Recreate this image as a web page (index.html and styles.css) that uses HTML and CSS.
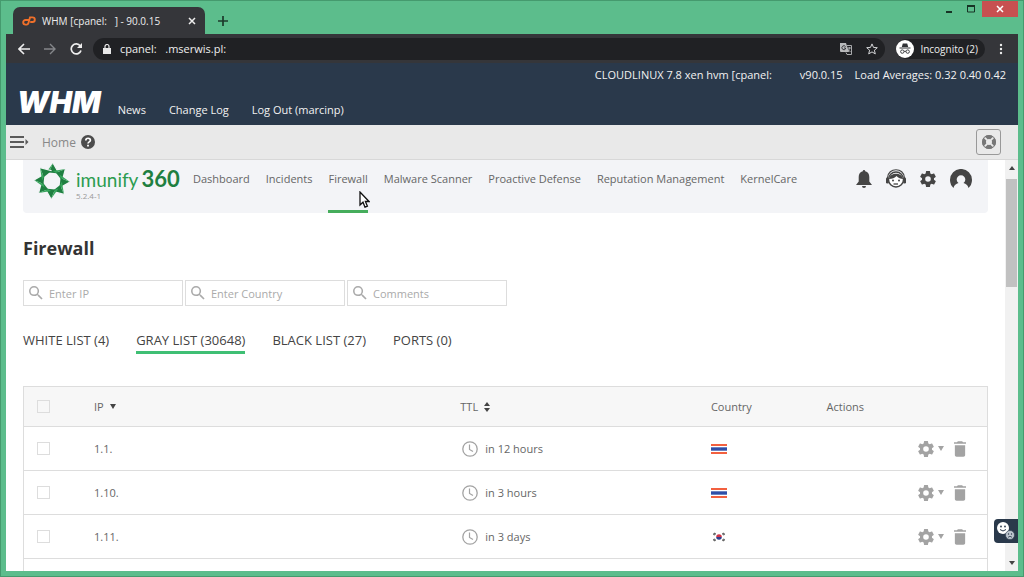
FILE: index.html
```html
<!DOCTYPE html>
<html lang="en">
<head>
<meta charset="utf-8">
<title>WHM - 90.0.15</title>
<link rel="stylesheet" href="styles.css">
</head>
<body>
<svg class="defs" aria-hidden="true">
  <symbol id="gear" viewBox="2 2 20 20"><path d="M19.43 12.98c.04-.32.07-.64.07-.98s-.03-.66-.07-.98l2.11-1.65a.5.5 0 0 0 .12-.64l-2-3.46a.5.5 0 0 0-.61-.22l-2.49 1a7.3 7.3 0 0 0-1.69-.98l-.38-2.65A.49.49 0 0 0 14 2h-4a.49.49 0 0 0-.49.42l-.38 2.65c-.61.25-1.17.59-1.69.98l-2.49-1a.5.5 0 0 0-.61.22l-2 3.46a.5.5 0 0 0 .12.64l2.11 1.65c-.04.32-.07.65-.07.98s.03.66.07.98l-2.11 1.65a.5.5 0 0 0-.12.64l2 3.46c.12.22.39.3.61.22l2.49-1c.52.4 1.08.73 1.69.98l.38 2.65c.03.24.24.42.49.42h4c.25 0 .46-.18.49-.42l.38-2.65c.61-.25 1.17-.59 1.69-.98l2.49 1c.23.09.49 0 .61-.22l2-3.46a.5.5 0 0 0-.12-.64zM12 15.5a3.5 3.5 0 1 1 0-7 3.5 3.5 0 0 1 0 7z"/></symbol>
  <symbol id="search" viewBox="3 3 18 18"><path d="M15.5 14h-.79l-.28-.27A6.47 6.47 0 0 0 16 9.5 6.5 6.5 0 1 0 9.5 16c1.61 0 3.09-.59 4.23-1.57l.27.28v.79l5 4.99L20.49 19zm-6 0a4.5 4.5 0 1 1 0-9 4.5 4.5 0 0 1 0 9z"/></symbol>
  <symbol id="trash" viewBox="5 3 14 18"><path d="M6 19c0 1.100.9 2 2 2h8c1.100 0 2-.9 2-2V7.500H6zM19 4h-3.500l-1-1h-5l-1 1H5v2h14z"/></symbol>
  <symbol id="clock" viewBox="0 0 16 16"><circle cx="8" cy="8" r="7.200" fill="none" stroke="currentColor" stroke-width="1.300"/><path d="M7.500 3.500v5l3.500 2" fill="none" stroke="currentColor" stroke-width="1.200"/></symbol>
  <symbol id="thai" viewBox="0 0 16 10"><path fill="#fff" d="M0 0h16v10H0z"/><path fill="#f2603f" d="M0 0h16v2H0zM0 8h16v2H0z"/><path fill="#2f4fa8" d="M0 3.300h16v3.400H0z"/></symbol>
  <symbol id="korea" viewBox="0 0 16 10"><path fill="#cf3448" d="M5.200 5a2.800 2.800 0 0 1 5.600 0z"/><path fill="#2f3f8c" d="M5.200 5a2.800 2.800 0 0 0 5.600 0z"/><path d="M2.500 2.800l2-1.600M2.500 7.200l2 1.600M13.500 2.800l-2-1.600M13.500 7.200l-2 1.600" stroke="#444" stroke-width="2" stroke-dasharray="1.100 .3"/></symbol>
</svg>
<div class="window">
  <header class="tabstrip">
    <div class="tab">
      <svg class="i-cp" viewBox="0 0 14 10"><g fill="none" stroke="#f0702a" stroke-width="1.900"><path d="M6.500 4H3.500a2.300 2.300 0 0 0 0 4.600H4.800c.8 0 1.200-.4 1.500-1.200L8 1.400h2.500a2.300 2.300 0 0 1 0 4.600H8.200"/></g></svg>
      <span class="tab-title">WHM [cpanel: &nbsp; ] - 90.0.15</span>
      <button class="bare" aria-label="Close tab"><svg class="i8" viewBox="0 0 8 8"><path d="M1 1l6 6M7 1L1 7" stroke="#eee" stroke-width="1.500"/></svg></button>
    </div>
    <button class="bare newtab" aria-label="New tab"><svg class="i10" viewBox="0 0 10 10"><path d="M5 0v10M0 5h10" stroke="#1d3a2b" stroke-width="1.700"/></svg></button>
    <div class="wincontrols">
      <button class="bare wc" aria-label="Minimize"><svg class="i10" viewBox="0 0 10 10"><path d="M2 8h6" stroke="#173325" stroke-width="2"/></svg></button>
      <button class="bare wc" aria-label="Maximize"><svg class="i10" viewBox="0 0 10 10"><path d="M1.500 2v6h7V2" fill="none" stroke="#173325"/><path d="M1 2h8" stroke="#173325" stroke-width="2"/></svg></button>
      <button class="bare closewin" aria-label="Close window"><svg class="i8" viewBox="0 0 8 8"><path d="M1 1l6 6M7 1L1 7" stroke="#fff" stroke-width="1.500"/></svg></button>
    </div>
  </header>
  <div class="toolbar">
    <button class="bare" aria-label="Back"><svg class="i12" viewBox="0 0 12 12"><path d="M12 6H1M6 1L1 6l5 5" fill="none" stroke="#eee" stroke-width="1.600"/></svg></button>
    <button class="bare" aria-label="Forward"><svg class="i12" viewBox="0 0 12 12"><path d="M0 6h11M6 1l5 5-5 5" fill="none" stroke="#85878a" stroke-width="1.400"/></svg></button>
    <button class="bare" aria-label="Reload"><svg class="i12" viewBox="0 0 12 12"><path d="M10.300 3A5 5 0 1 0 11 7.500" fill="none" stroke="#eee" stroke-width="1.700"/><path d="M12 0v5H7z" fill="#eee"/></svg></button>
    <div class="address">
      <svg class="i-lock" viewBox="0 0 8 10"><path d="M0 4h8v6H0z" fill="#e8e8e8"/><path d="M2 4V2.500a2 2 0 0 1 4 0V4" fill="none" stroke="#e8e8e8" stroke-width="1.200"/></svg>
      <span class="url">cpanel: &nbsp; .mserwis.pl:</span>
      <button class="bare" aria-label="Translate"><svg class="i12" viewBox="0 0 12 12"><path d="M0 0h6l3 9H1a1 1 0 0 1-1-1z" fill="#b9babc"/><path d="M5.500 3.500A2 2 0 1 0 5.500 6V5H4" fill="none" stroke="#35363a"/><path d="M7 2.500h4.500v9H7L6 9.500M7.500 5h3.500M9.300 4v1c0 2-1 3-2 3.700M8 6.500l2.500 2.500" fill="none" stroke="#b9babc" stroke-width=".9"/></svg></button>
      <button class="bare" aria-label="Bookmark"><svg class="i12" viewBox="0 0 12 12"><path d="M6 .9l1.500 3.500 3.800.3-2.900 2.500.9 3.700L6 8.900l-3.300 2 .9-3.700L.7 4.700l3.800-.3z" fill="none" stroke="#d5d6d8"/></svg></button>
    </div>
    <div class="incognito">
      <svg class="i18" viewBox="0 0 18 18"><circle cx="9" cy="9" r="9" fill="#fff"/><path d="M5.800 7l1-3.500h4.400l1 3.500zM3.500 7.500h11v1h-11z" fill="#303236"/><g fill="none" stroke="#303236" stroke-width=".9"><circle cx="6.300" cy="11.600" r="1.700"/><circle cx="11.700" cy="11.600" r="1.700"/><path d="M8 11.500q1-.7 2 0"/></g></svg>
      <span>Incognito (2)</span>
    </div>
    <button class="bare" aria-label="Menu"><svg class="i-dots" viewBox="0 0 4 12"><g fill="#eee"><circle cx="2" cy="2" r="1.200"/><circle cx="2" cy="6" r="1.200"/><circle cx="2" cy="10" r="1.200"/></g></svg></button>
  </div>
  <div class="whm">
    <div class="whm-left">
      <span class="whm-logo">WHM</span>
      <nav class="whm-nav"><a href="#">News</a><a href="#">Change Log</a><a href="#">Log Out (marcinp)</a></nav>
    </div>
    <div class="whm-info"><span class="host">CLOUDLINUX 7.8 xen hvm [cpanel:</span><span>v90.0.15</span><span>Load Averages: 0.32 0.40 0.42</span></div>
  </div>
  <div class="crumbs">
    <button class="bare" aria-label="Toggle menu"><svg class="i-menu" viewBox="0 0 19 14"><path d="M0 2h14M0 7h14M0 12h14" stroke="#5a5a5a" stroke-width="2"/><path d="M15.500 4l3 3-3 3z" fill="#5a5a5a"/></svg></button>
    <a class="home" href="#">Home</a>
    <svg class="i14" viewBox="0 0 14 14"><circle cx="7" cy="7" r="7" fill="#4c4c4c"/><path d="M4.800 5.500c0-3 4.600-2.900 4.600-.3C9.400 7 7 6.700 7 8.600" fill="none" stroke="#fff" stroke-width="1.700"/><path d="M6.100 9.800h1.800v1.700H6.100z" fill="#fff"/></svg>
    <button class="bare support" aria-label="Support"><svg class="i14" viewBox="0 0 14 14"><circle cx="7" cy="7" r="5" fill="none" stroke="#777" stroke-width="4"/><path d="M2.200 2.200l3 3M11.800 2.200l-3 3M2.200 11.800l3-3M11.800 11.800l-3-3" stroke="#e9e9e9" stroke-width="1.800"/><circle cx="7" cy="7" r="6.500" fill="none" stroke="#777"/></svg></button>
  </div>
  <div class="viewport">
    <main class="page">
      <div class="card">
        <div class="brand">
          <svg class="i-star" viewBox="-18 -18 36 36"><defs><g id="blade"><path d="M1-18L7-7.500-3-8.500z" fill="#1f7f41"/><path d="M1-18L-3-8.500-6.500-7.500z" fill="#36a65c"/><path d="M1-18L7-7.500" stroke="#f3f4f7" stroke-width="1.200"/></g></defs><use href="#blade"/><use href="#blade" transform="rotate(45)"/><use href="#blade" transform="rotate(90)"/><use href="#blade" transform="rotate(135)"/><use href="#blade" transform="rotate(180)"/><use href="#blade" transform="rotate(225)"/><use href="#blade" transform="rotate(270)"/><use href="#blade" transform="rotate(315)"/></svg>
          <div class="brand-text"><div class="brand-name">imunify<b>360</b></div><div class="version">5.2.4-1</div></div>
        </div>
        <nav class="mainnav"><a href="#">Dashboard</a><a href="#">Incidents</a><a href="#" class="on">Firewall</a><a href="#">Malware Scanner</a><a href="#">Proactive Defense</a><a href="#">Reputation Management</a><a href="#">KernelCare</a></nav>
        <div class="tools">
          <button class="bare" aria-label="Notifications"><svg class="i-bell" viewBox="0 0 16 18"><path d="M8 0c.8 0 1.200.6 1.200 1.300C12 2 13.300 4 13.300 7v4.500L16 15H0l2.700-3.500V7c0-3 1.300-5 4.100-5.700C6.800.6 7.200 0 8 0zM6 16h4a2 2 0 0 1-4 0z"/></svg></button>
          <button class="bare" aria-label="Help"><svg class="i20" viewBox="0 0 20 20"><circle cx="10" cy="10.500" r="7.500" fill="#fff" stroke="#454545" stroke-width="1.400"/><path d="M3 10c1-7 13-7 14 0-2 0-5-1-6.500-3C9 9 6 10 3 10z"/><path d="M1.500 9C2-2 18-2 18.500 9" fill="none" stroke="#454545" stroke-width="1.200"/><rect x="0" y="8.500" width="2.800" height="6" rx="1.300"/><rect x="17.200" y="8.500" width="2.800" height="6" rx="1.300"/><circle cx="7" cy="11.500" r="1"/><circle cx="13" cy="11.500" r="1"/><path d="M7.500 15h4.500" stroke="#454545" stroke-width="1.300"/></svg></button>
          <button class="bare" aria-label="Settings"><svg class="i16"><use href="#gear"/></svg></button>
          <button class="bare" aria-label="Account"><svg class="i-user" viewBox="0 0 22 20"><path d="M3.500 19A11 11 0 1 1 18.500 19c-.7-3-2.500-4.300-5-5a4.300 4.300 0 1 0-5 0c-2.500.7-4.300 2-5 5z"/></svg></button>
        </div>
      </div>
      <h1>Firewall</h1>
      <div class="filters">
        <label class="field"><svg class="i14"><use href="#search"/></svg><input type="text" aria-label="Enter IP" placeholder="Enter IP"></label>
        <label class="field"><svg class="i14"><use href="#search"/></svg><input type="text" aria-label="Enter Country" placeholder="Enter Country"></label>
        <label class="field"><svg class="i14"><use href="#search"/></svg><input type="text" aria-label="Comments" placeholder="Comments"></label>
      </div>
      <nav class="lists"><a href="#">WHITE LIST (4)</a><a href="#" class="on">GRAY LIST (30648)</a><a href="#">BLACK LIST (27)</a><a href="#">PORTS (0)</a></nav>
      <table>
        <colgroup><col class="c1"><col class="c2"><col class="c3"><col class="c4"><col></colgroup>
        <thead><tr><th><input type="checkbox" aria-label="Select all"></th><th><span class="cell">IP <svg class="i-caret" viewBox="0 0 6 5"><path d="M0 0h6L3 5z"/></svg></span></th><th><span class="cell">TTL <svg class="i-sort" viewBox="0 0 6 10"><path d="M0 4h6L3 0zM0 6h6L3 10z"/></svg></span></th><th>Country</th><th>Actions</th></tr></thead>
        <tbody>
          <tr><td><input type="checkbox" aria-label="Select 1.1."></td><td>1.1.</td><td><span class="cell ttl"><svg class="i16"><use href="#clock"/></svg>in 12 hours</span></td><td><svg class="flag"><use href="#thai"/></svg></td><td><span class="actions"><button class="bare" aria-label="Options"><svg class="i16"><use href="#gear"/></svg><svg class="i-caret" viewBox="0 0 6 5"><path d="M0 0h6L3 5z"/></svg></button><button class="bare" aria-label="Delete"><svg class="i-trash"><use href="#trash"/></svg></button></span></td></tr>
          <tr><td><input type="checkbox" aria-label="Select 1.10."></td><td>1.10.</td><td><span class="cell ttl"><svg class="i16"><use href="#clock"/></svg>in 3 hours</span></td><td><svg class="flag"><use href="#thai"/></svg></td><td><span class="actions"><button class="bare" aria-label="Options"><svg class="i16"><use href="#gear"/></svg><svg class="i-caret" viewBox="0 0 6 5"><path d="M0 0h6L3 5z"/></svg></button><button class="bare" aria-label="Delete"><svg class="i-trash"><use href="#trash"/></svg></button></span></td></tr>
          <tr><td><input type="checkbox" aria-label="Select 1.11."></td><td>1.11.</td><td><span class="cell ttl"><svg class="i16"><use href="#clock"/></svg>in 3 days</span></td><td><svg class="flag"><use href="#korea"/></svg></td><td><span class="actions"><button class="bare" aria-label="Options"><svg class="i16"><use href="#gear"/></svg><svg class="i-caret" viewBox="0 0 6 5"><path d="M0 0h6L3 5z"/></svg></button><button class="bare" aria-label="Delete"><svg class="i-trash"><use href="#trash"/></svg></button></span></td></tr>
          <tr><td></td><td></td><td></td><td></td><td></td></tr>
        </tbody>
      </table>
    </main>
    <div class="scrollbar">
      <svg class="i-arrow" viewBox="0 0 6 4"><path d="M0 4h6L3 0z"/></svg>
      <div class="thumb"></div>
      <svg class="i-arrow down" viewBox="0 0 6 4"><path d="M0 0h6L3 4z"/></svg>
    </div>
    <button class="bare feedback" aria-label="Feedback"><svg class="i20" viewBox="0 0 20 20"><circle cx="7" cy="7" r="6" fill="#fff"/><circle cx="5" cy="5.500" r=".9" fill="#2a394b"/><circle cx="9" cy="5.500" r=".9" fill="#2a394b"/><path d="M4 8.500q3 3 6 0" fill="none" stroke="#2a394b"/><circle cx="14" cy="14" r="4.500" fill="#bcc5ce" stroke="#2a394b" stroke-width=".6"/><circle cx="12.500" cy="13" r=".7" fill="#2a394b"/><circle cx="15.500" cy="13" r=".7" fill="#2a394b"/><path d="M12 16.300q2-2 4 0" fill="none" stroke="#2a394b" stroke-width=".8"/></svg></button>
    <svg class="pointer" viewBox="0 0 11 17"><path d="M1 1v13l3-2.800 2 5 2.400-1-2-4.700H10z" fill="#fff" stroke="#111" stroke-width="1.300"/></svg>
  </div>
</div>
</body>
</html>
```
FILE: styles.css
```css
* { box-sizing: border-box; }
body { margin: 0; font-family: "Open Sans", "Noto Sans", sans-serif; font-size: 11px; color: #666; }
a { color: inherit; text-decoration: none; }
svg { display: block; flex: none; fill: currentColor; }
.defs { position: absolute; width: 0; height: 0; }
.bare { display: flex; align-items: center; justify-content: center; border: 0; padding: 0; background: none; color: inherit; font: inherit; }
.i8 { width: 8px; height: 8px; }
.i10 { width: 10px; height: 10px; }
.i12 { width: 12px; height: 12px; }
.i14 { width: 14px; height: 14px; }
.i16 { width: 16px; height: 16px; }
.i18 { width: 18px; height: 18px; }
.i20 { width: 20px; height: 20px; }

.window { height: 100vh; display: flex; flex-direction: column; background: #5cbd8c; border: 1px solid #459a6e; padding: 0 5px 5px; }
.tabstrip { height: 33px; flex: none; display: flex; align-items: flex-end; }
.tab { width: 192px; height: 27px; margin-left: 7px; padding: 0 9px; display: flex; align-items: center; gap: 6px; background: #35363a; border-radius: 7px 7px 0 0; color: #eee; font-size: 10px; }
.tab-title { flex: 1; white-space: nowrap; }
.i-cp { width: 14px; height: 10px; }
.newtab { width: 36px; height: 27px; }
.wincontrols { margin-left: auto; align-self: flex-start; display: flex; }
.wc { width: 22px; height: 16px; }
.closewin { width: 36px; height: 16px; background: #c75050; }

.toolbar { height: 29px; flex: none; display: flex; align-items: center; gap: 14px; padding: 0 15px 0 12px; background: #35363a; color: #eee; }
.address { flex: 1; height: 22px; display: flex; align-items: center; gap: 14px; padding: 0 7px 0 10px; margin: 0 -3px; border-radius: 11px; background: #202124; }
.url { flex: 1; font-size: 11px; margin-left: -5px; }
.i-lock { width: 8px; height: 10px; }
.incognito { height: 20px; display: flex; align-items: center; gap: 6px; padding-right: 7px; border-radius: 10px; background: #202124; font-size: 10px; }
.i-dots { width: 4px; height: 12px; }

.whm { height: 62px; flex: none; display: flex; justify-content: space-between; padding: 0 12px 0 11px; background: #2a394b; color: #f2f2f2; }
.whm-left { display: flex; align-items: flex-end; gap: 17px; padding-bottom: 7px; }
.whm-logo { font: italic 900 30px/32px "Inter", sans-serif; color: #fff; }
.whm-nav { display: flex; gap: 23px; font-size: 11px; line-height: 16px; }
.whm-info { display: flex; gap: 12px; padding-top: 4px; font-size: 11px; line-height: 16px; white-space: nowrap; }
.host { margin-right: 16px; }

.crumbs { height: 35px; flex: none; display: flex; align-items: center; gap: 5px; padding: 0 17px 0 4px; background: #e9e9e9; border-bottom: 1px solid #d8d8d8; }
.i-menu { width: 19px; height: 14px; }
.home { margin-left: 8px; font-size: 12px; color: #888; }
.support { margin-left: auto; width: 25px; height: 26px; border: 1px solid #999; border-radius: 3px; }

.viewport { flex: 1; min-height: 0; display: flex; position: relative; overflow: hidden; background: #fff; }
.page { flex: 1; min-width: 0; padding: 0 17px; }
.card { height: 53px; display: flex; background: #f3f4f7; border-radius: 0 0 4px 4px; }
.brand { display: flex; gap: 6px; padding: 3px 0 0 11px; width: 170px; }
.i-star { width: 36px; height: 36px; }
.brand-name { display: flex; align-items: baseline; gap: 3px; padding-top: 4px; font: 400 19px/24px "Lato", sans-serif; color: #2c9c50; }
.brand-name b { font-size: 22px; font-weight: 700; color: #1f7f41; }
.version { font-size: 8px; line-height: 8px; color: #999; }
.mainnav { display: flex; gap: 16px; font-size: 11px; line-height: 37px; white-space: nowrap; }
.mainnav .on { border-bottom: 3px solid #46ad5c; }
.tools { margin-left: auto; height: 37px; display: flex; align-items: center; gap: 14px; padding-right: 16px; color: #454545; }
.i-bell { width: 16px; height: 18px; }
.i-user { width: 22px; height: 20px; }
h1 { margin: 23px 0 20px; font-size: 18px; line-height: 24px; color: #333; }
.filters { display: flex; gap: 2px; }
.field { width: 160px; height: 26px; display: flex; align-items: center; gap: 6px; padding: 0 5px; border: 1px solid #ddd; color: #aaa; }
.field input { flex: 1; min-width: 0; border: 0; padding: 0; outline: 0; font: inherit; }
.field input::placeholder { color: #aaa; }
.lists { display: flex; gap: 27px; margin: 24px 0 32px; font-size: 13px; line-height: 20px; color: #444; }
.lists a { padding-bottom: 1px; border-bottom: 3px solid transparent; }
.lists .on { border-color: #3fbf74; }
table { width: 100%; table-layout: fixed; border-collapse: collapse; border: 1px solid #ddd; }
.c1 { width: 7%; }
.c2 { width: 38%; }
.c3 { width: 26%; }
.c4 { width: 12%; }
th, td { height: 44px; padding: 0 0 0 3px; border-bottom: 1px solid #ddd; text-align: left; font-weight: 400; }
th { height: 40px; background: #f7f7f7; }
th:first-child, td:first-child { padding-left: 13px; }
table input { display: block; appearance: none; width: 13px; height: 13px; margin: 0; border: 1px solid #ddd; }
.cell { display: flex; align-items: center; gap: 6px; }
.ttl { gap: 7px; padding-left: 2px; }
.ttl svg, .actions { color: #a3a3a3; }
.i-caret { width: 6px; height: 5px; }
.i-sort { width: 6px; height: 10px; }
th svg { color: #444; }
.flag { width: 16px; height: 10px; }
.actions { display: flex; justify-content: flex-end; gap: 10px; padding-right: 21px; }
.actions .bare { gap: 4px; }
.i-trash { width: 12px; height: 16px; }

.scrollbar { width: 13px; flex: none; display: flex; flex-direction: column; align-items: center; padding: 6px 0; background: #f1f1f1; color: #444; }
.i-arrow { width: 6px; height: 4px; }
.thumb { width: 11px; height: 27%; margin-top: 9px; background: #c1c1c1; }
.down { margin-top: auto; }
.feedback { position: absolute; right: 0; bottom: 28px; width: 24px; height: 24px; background: #2a394b; border-radius: 4px 0 0 4px; }
.pointer { position: absolute; left: 353px; top: 31px; width: 11px; height: 17px; }
```
